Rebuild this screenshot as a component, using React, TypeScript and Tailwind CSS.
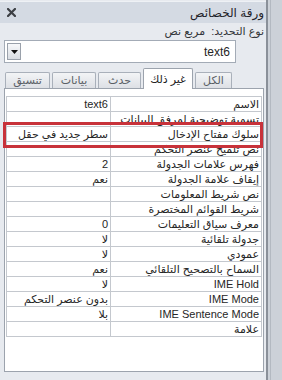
import React from 'react';

const rows: [string, string][] = [
  ['الاسم', 'text6'],
  ['تسمية توضيحية لمرفق البيانات', ''],
  ['سلوك مفتاح الإدخال', 'سطر جديد في حقل'],
  ['نص تلميح عنصر التحكم', ''],
  ['فهرس علامات الجدولة', '2'],
  ['إيقاف علامة الجدولة', 'نعم'],
  ['نص شريط المعلومات', ''],
  ['شريط القوائم المختصرة', ''],
  ['معرف سياق التعليمات', '0'],
  ['جدولة تلقائية', 'لا'],
  ['عمودي', 'لا'],
  ['السماح بالتصحيح التلقائي', 'نعم'],
  ['IME Hold', 'لا'],
  ['IME Mode', 'بدون عنصر التحكم'],
  ['IME Sentence Mode', 'بلا'],
  ['علامة', ''],
];

const tabs = [
  { label: 'الكل', w: 'w-[37px]' },
  { label: 'غير ذلك', w: 'w-[50px]', active: true },
  { label: 'حدث', w: 'w-[43px]' },
  { label: 'بيانات', w: 'w-[44px]' },
  { label: 'تنسيق', w: 'w-[45px]' },
];

export default function App() {
  return (
    <div className="relative w-[282px] h-[380px] flex overflow-hidden bg-[#e7eaef] text-[#262626] font-['Liberation_Sans','DejaVu_Sans',sans-serif]">
      {/* Property sheet */}
      <div dir="rtl" className="w-[266px] flex flex-col">
        {/* Title bar */}
        <div className="h-[22px] mt-[1px] flex items-center justify-between pr-[2px] pl-[7px] bg-[#d4dae3] border-t border-[#eef1f5]">
          <span className="text-[12px] text-[#1f2329] leading-none">ورقة الخصائص</span>
          <svg width="9" height="9" viewBox="0 0 9 9">
            <path d="M1 1 L8 8 M8 1 L1 8" stroke="#3c3f44" strokeWidth="2.2" strokeLinecap="square" />
          </svg>
        </div>

        {/* Selection type */}
        <div className="h-[17px] flex items-center pr-[2px] text-[11px] text-[#33363a]">
          نوع التحديد:&nbsp; مربع نص
        </div>

        {/* Object combo */}
        <div className="mr-[30px] ml-[4px] h-[23px] flex items-center bg-white border border-[#a3abb6]">
          <span className="flex-1 pr-[5px] text-[12px]">text6</span>
          <div className="ml-[2px] w-[14px] h-[17px] flex items-center justify-center border border-[#9aa1ab] bg-gradient-to-b from-[#f7f8fa] to-[#d9dde3]">
            <svg width="7" height="4" viewBox="0 0 7 4">
              <path d="M0 0 H7 L3.5 4 Z" fill="#111" />
            </svg>
          </div>
        </div>

        {/* Tabs */}
        <div className="mt-[5px] h-[20px] flex items-end gap-[2px] pr-[34px] relative z-10">
          {tabs.map((t) =>
            t.active ? (
              <div
                key={t.label}
                className={`${t.w} h-[21px] -mb-[1px] flex items-center justify-center bg-white border border-b-0 border-[#9ca3ad] rounded-t-[2px] text-[11px] text-[#222]`}
              >
                {t.label}
              </div>
            ) : (
              <div
                key={t.label}
                className={`${t.w} h-[16px] flex items-center justify-center bg-gradient-to-b from-[#f3f4f6] to-[#dde0e5] border border-b-0 border-[#a9b0ba] rounded-t-[2px] text-[11px] text-[#5a5f66]`}
              >
                {t.label}
              </div>
            )
          )}
        </div>

        {/* Content */}
        <div className="ml-[4px] mr-[2px] mb-[8px] flex-1 bg-white border border-[#9ca3ad] pt-[7px] pr-[1px] pl-[1px]">
          <div className="border-t border-x border-[#c4c8ce]">
            {rows.map(([label, value]) => (
              <div key={label} className="h-[15px] flex border-b border-[#c4c8ce] text-[11px] leading-[14px]">
                <div className="flex-1 pr-[2px] border-l border-[#c4c8ce] whitespace-nowrap overflow-hidden">
                  <span dir="auto">{label}</span>
                </div>
                <div className="w-[103px] pr-[2px] whitespace-nowrap overflow-hidden">{value}</div>
              </div>
            ))}
          </div>
        </div>
      </div>

      {/* Splitter strip */}
      <div className="flex-1 border-l-2 border-[#8a9099] bg-[#ccd1d8]">
        <div className="ml-[2px] h-full border-l border-[#b3b9c1]" />
      </div>

      {/* Highlight annotation */}
      <div className="absolute left-[3px] top-[122px] w-[260px] h-[26px] border-[3px] border-[#c8323a]" />
    </div>
  );
}
